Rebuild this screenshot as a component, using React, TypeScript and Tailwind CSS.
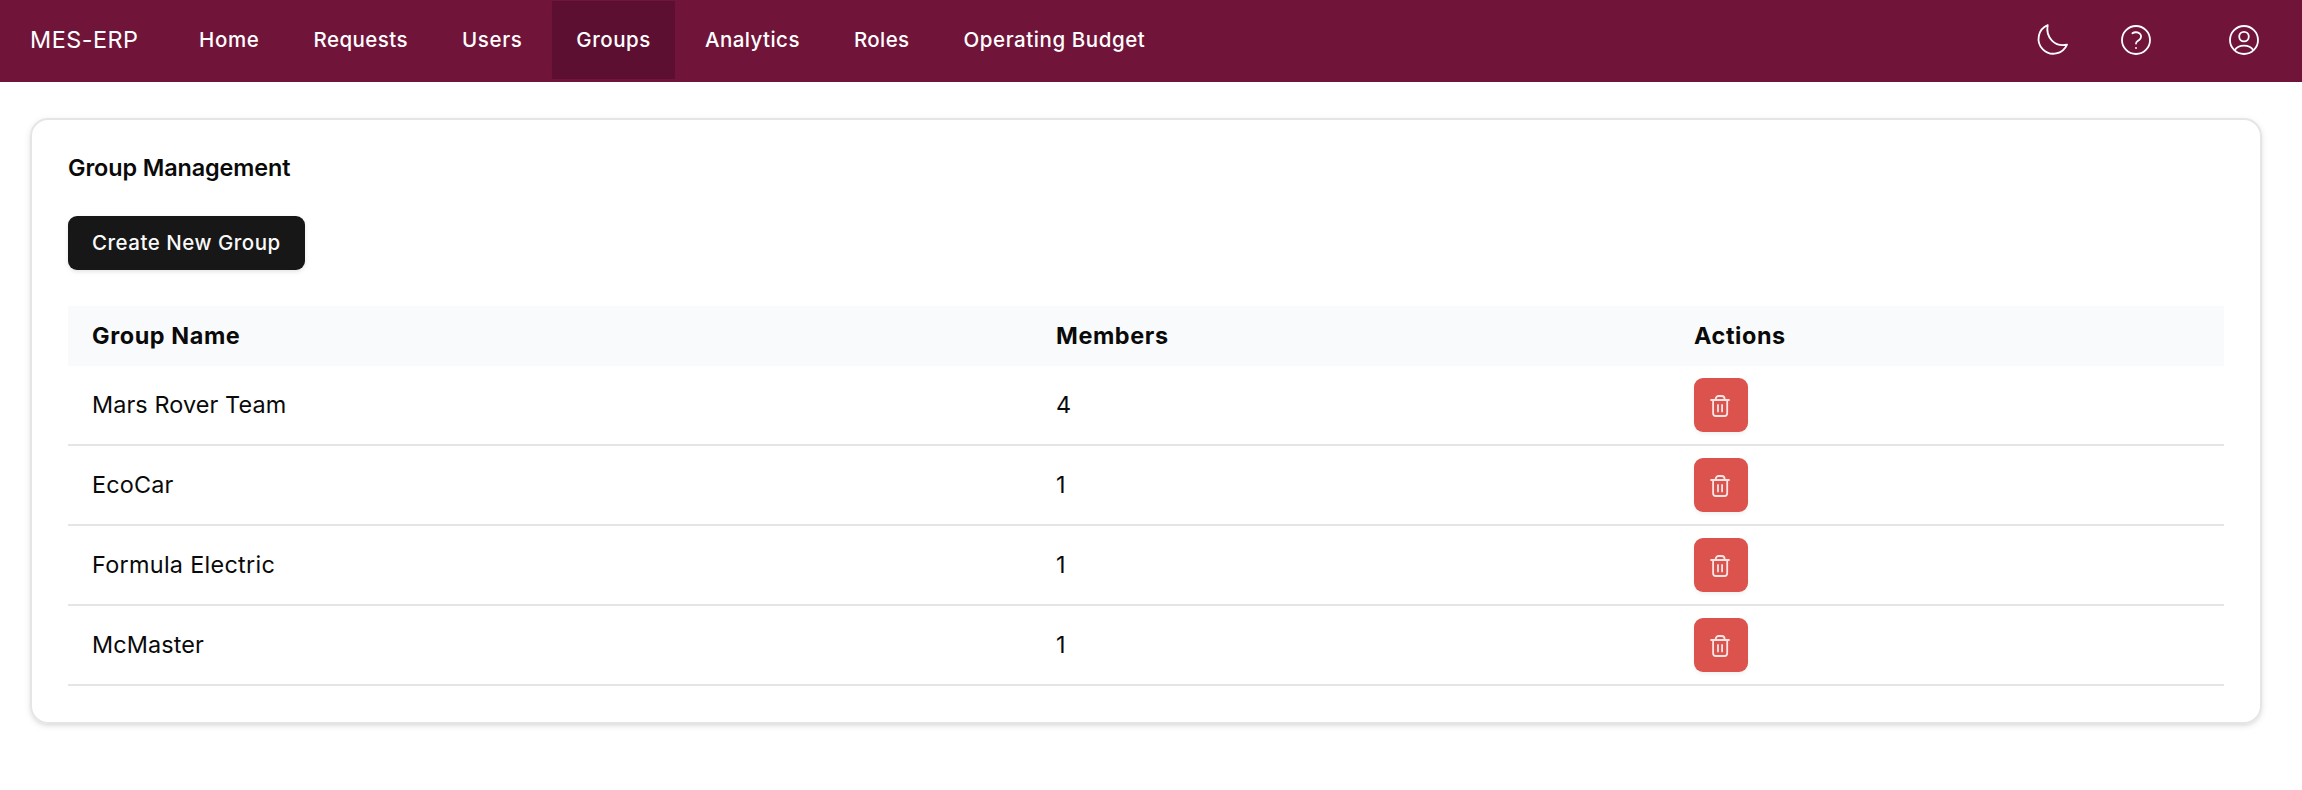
const navItems = [
  { label: "Home", tracking: "tracking-[0.65px]" },
  { label: "Requests", tracking: "tracking-[0.45px]" },
  { label: "Users", tracking: "tracking-[0.6px]" },
  { label: "Groups", tracking: "tracking-[0.55px]" },
  { label: "Analytics", tracking: "tracking-[0.45px]" },
  { label: "Roles", tracking: "tracking-[0.4px]" },
  { label: "Operating Budget", tracking: "tracking-[0.57px]" },
];

const groups = [
  { name: "Mars Rover Team", members: 4, tracking: "tracking-[0.1px]" },
  { name: "EcoCar", members: 1, tracking: "tracking-[0.15px]" },
  { name: "Formula Electric", members: 1, tracking: "tracking-[0.3px]" },
  { name: "McMaster", members: 1, tracking: "tracking-[0.12px]" },
];

const stroke = {
  fill: "none",
  stroke: "currentColor",
  strokeLinecap: "round",
  strokeLinejoin: "round",
} as const;

function MoonIcon() {
  return (
    <svg className="size-9" viewBox="0 0 36 36" strokeWidth="1.8" {...stroke}>
      <path d="M13.7 3.2A14.8 14.8 0 1 0 33 22.6C21 25.3 11.3 15.5 13.7 3.2Z" />
    </svg>
  );
}

function HelpIcon() {
  return (
    <svg className="size-9" viewBox="0 0 36 36" strokeWidth="1.8" {...stroke}>
      <circle cx="18" cy="18" r="14" />
      <path d="M14.4 11.2C16.5 9.8 20 9.9 21.8 11.7C23.7 13.5 23.4 16.1 21.4 17.7C19.5 19.2 18 19.4 18 21.5" />
      <path d="M18 26h.01" />
    </svg>
  );
}

function UserIcon() {
  return (
    <svg className="size-9" viewBox="0 0 36 36" strokeWidth="1.8" {...stroke}>
      <circle cx="18" cy="18" r="14" />
      <circle cx="18" cy="14.6" r="4.8" />
      <path d="M8.8 28C10.6 25.2 14 23.6 18 23.6S25.4 25.2 27.2 28" />
    </svg>
  );
}

function TrashIcon() {
  return (
    <svg className="size-6" viewBox="0 0 24 24" strokeWidth="1.8" {...stroke}>
      <path d="M2 7H20M4.1 7V20.2A2.8 2.8 0 0 0 6.9 23H15.4A2.8 2.8 0 0 0 18.2 20.2V7M6.7 6.8V5.9A2.9 2.9 0 0 1 9.6 3H12.7A2.9 2.9 0 0 1 15.6 5.9V6.8M9 12V18.4M13.1 12V18.4" />
    </svg>
  );
}

export default function App() {
  return (
    <div className="min-h-screen bg-white font-['Inter',sans-serif] text-[23.4px] leading-[36px] tracking-[0.6px] text-neutral-950">
      <nav className="flex h-[82px] items-start bg-[#701539] px-[30px] pt-px text-white">
        <a className="flex h-[78px] w-[145px] items-center tracking-[0.5px]">MES-ERP</a>
        <ul className="flex gap-[6px] text-[20.5px] font-medium">
          {navItems.map(({ label, tracking }) => (
            <li key={label} className={`flex h-[78px] items-center px-6 ${tracking} ${label === "Groups" ? "bg-[#5d0f32]" : ""}`}>
              {label}
            </li>
          ))}
        </ul>
        <div className="ml-auto flex h-[78px] items-center pr-[10px]">
          <button className="mr-12"><MoonIcon /></button>
          <button className="mr-[72px]"><HelpIcon /></button>
          <button><UserIcon /></button>
        </div>
      </nav>
      <main className="px-[30px] pt-9">
        <section className="w-[2232px] rounded-[18px] border-2 border-neutral-200 p-9 shadow-[0_2px_6px_rgba(0,0,0,0.1),0_2px_4px_-2px_rgba(0,0,0,0.1)]">
          <h1 className="leading-6 font-semibold tracking-[-0.1px]">Group Management</h1>
          <button className="mt-9 flex h-[54px] w-[237px] items-center rounded-[9px] bg-neutral-900 pl-6 text-[20.5px] font-medium tracking-[0.5px] whitespace-nowrap text-neutral-50 shadow-[0_2px_4px_rgba(0,0,0,0.1)]">
            Create New Group
          </button>
          <table className="mt-9 w-full table-fixed border-collapse text-left">
            <colgroup>
              <col className="w-[964px]" />
              <col className="w-[638px]" />
              <col />
            </colgroup>
            <thead>
              <tr className="h-[60px] bg-[#f9fafb]">
                <th className="px-6 py-0 font-bold">Group Name</th>
                <th className="px-6 py-0 font-bold">Members</th>
                <th className="px-6 py-0 font-bold">Actions</th>
              </tr>
            </thead>
            <tbody>
              {groups.map((g) => (
                <tr key={g.name} className="h-20 shadow-[inset_0_-2px_0_#e5e5e5]">
                  <td className={`px-6 pt-0 pb-[2px] ${g.tracking}`}>{g.name}</td>
                  <td className="px-6 pt-0 pb-[2px]">{g.members}</td>
                  <td className="px-6 pt-0 pb-[2px]">
                    <button className="flex size-[54px] items-center justify-center rounded-[9px] bg-[#dc524d] text-white/85 shadow-[0_2px_4px_rgba(0,0,0,0.06)]">
                      <TrashIcon />
                    </button>
                  </td>
                </tr>
              ))}
            </tbody>
          </table>
        </section>
      </main>
    </div>
  );
}
